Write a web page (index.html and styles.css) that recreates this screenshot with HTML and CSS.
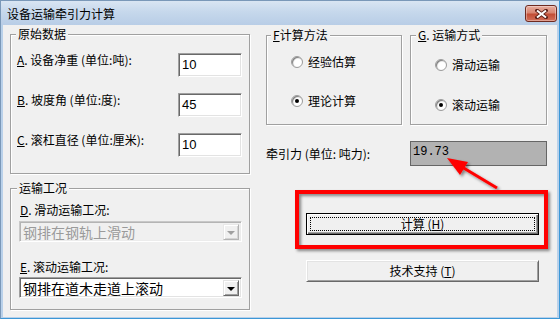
FILE: index.html
```html
<!DOCTYPE html>
<html lang="zh-CN">
<head>
<meta charset="utf-8">
<title>设备运输牵引力计算</title>
<link rel="stylesheet" href="styles.css">
</head>
<body>
<div class="window">
  <div class="titlebar">
    <span class="title">设备运输牵引力计算</span>
    <div class="close">
      <svg width="13" height="10" viewBox="0 0 13 10">
        <path d="M2 1.5 L11 8.5 M11 1.5 L2 8.5" stroke="#5a1e16" stroke-width="3.6" stroke-linecap="square"/>
        <path d="M2 1.5 L11 8.5 M11 1.5 L2 8.5" stroke="#fff" stroke-width="2"/>
      </svg>
    </div>
  </div>
  <div class="client">
    <div class="col-left">
      <fieldset class="group g-data">
        <legend>原始数据</legend>
        <div class="body">
          <div class="field"><span class="lbl"><u>A</u>. 设备净重 (单位:吨):</span><div class="input">10</div></div>
          <div class="field"><span class="lbl"><u>B</u>. 坡度角 (单位:度):</span><div class="input">45</div></div>
          <div class="field"><span class="lbl"><u>C</u>. 滚杠直径 (单位:厘米):</span><div class="input">10</div></div>
        </div>
      </fieldset>
      <fieldset class="group g-cond">
        <legend>运输工况</legend>
        <div class="body">
          <div class="lbl lbl-d"><u>D</u>. 滑动运输工况:</div>
          <div class="combo disabled"><span class="val">钢排在钢轨上滑动</span><span class="drop"><i></i></span></div>
          <div class="lbl lbl-e"><u>E</u>. 滚动运输工况:</div>
          <div class="combo combo-e"><span class="val">钢排在道木走道上滚动</span><span class="drop"><i></i></span></div>
        </div>
      </fieldset>
    </div>
    <div class="col-right">
      <div class="opts">
        <fieldset class="group g-method">
          <legend><u>F</u>计算方法</legend>
          <div class="body">
            <div class="radio"><span class="rb"></span>经验估算</div>
            <div class="radio"><span class="rb on"></span>理论计算</div>
          </div>
        </fieldset>
        <fieldset class="group g-mode">
          <legend><u>G</u>. 运输方式</legend>
          <div class="body">
            <div class="radio"><span class="rb"></span>滑动运输</div>
            <div class="radio"><span class="rb on"></span>滚动运输</div>
          </div>
        </fieldset>
      </div>
      <div class="result">
        <span class="lbl">牵引力 (单位: 吨力):</span>
        <div class="output">19.73</div>
      </div>
      <div class="buttons">
        <button class="btn btn-default"><span class="focus">计算 (<u>H</u>)</span></button>
        <button class="btn btn-support"><span class="cap">技术支持 (<u>T</u>)</span></button>
      </div>
    </div>
  </div>
  <svg class="annot" width="560" height="319" viewBox="0 0 560 319">
    <defs>
      <filter id="sh" x="-20%" y="-20%" width="140%" height="140%">
        <feDropShadow dx="2" dy="2" stdDeviation="1.6" flood-color="#000" flood-opacity="0.45"/>
      </filter>
    </defs>
    <g filter="url(#sh)">
      <rect x="297" y="192" width="249" height="55" fill="none" stroke="#ff0000" stroke-width="4"/>
      <line x1="497" y1="188" x2="462" y2="167" stroke="#ff0000" stroke-width="3"/>
      <polygon points="447,158 460,175 468,162" fill="#ff0000"/>
    </g>
  </svg>
</div>
</body>
</html>
```
FILE: styles.css
```css
* { box-sizing: border-box; }
body { margin: 0; background: #fff; }

.window {
  position: relative;
  width: 560px;
  height: 319px;
  display: flex;
  flex-direction: column;
  background: #b9d1ea;
  border: 1px solid #7a98b8;
  border-right-color: #3c97d6;
  border-bottom-color: #3c97d6;
  font-family: "Noto Sans CJK SC", sans-serif;
  font-size: 12px;
  line-height: 14px;
  color: #000;
}

.titlebar {
  height: 24px;
  flex: none;
  display: flex;
  align-items: flex-start;
  justify-content: space-between;
  padding-left: 6px;
  background: linear-gradient(to bottom, #d9e5f2 0%, #c6d8ec 45%, #b8cde6 100%);
}
.title { margin-top: 6px; font-size: 12px; line-height: 14px; }
.close {
  width: 32px;
  height: 17px;
  margin-top: 4px;
  margin-right: 2px;
  border: 1px solid #6e2a20;
  border-radius: 3px;
  background: linear-gradient(to bottom, #e7ad9f 0%, #d88571 45%, #c24d35 55%, #d2705a 100%);
  box-shadow: inset 0 0 0 1px rgba(255,255,255,0.35);
  display: flex;
  align-items: center;
  justify-content: center;
}

.client {
  flex: 1;
  margin: 0 2px 1px 2px;
  background: #f0f0f0;
  display: flex;
  padding-left: 7px;
}

.col-left { width: 240px; flex: none; }
.col-right { width: 281px; flex: none; margin-left: 16px; }

.group {
  margin: 0;
  padding: 0;
  min-width: 0;
  border: 1px solid #a0a0a0;
  box-shadow: 1px 1px 0 #fff, inset 1px 1px 0 #fff;
}
.group legend {
  padding: 0 2px;
  margin-left: 5px;
  background: #f0f0f0;
  line-height: 14px;
}

.lbl { white-space: pre; }

.g-data { width: 240px; margin-top: 2px; }
.g-data .body { padding: 12px 7px 16px 6px; }
.field {
  display: flex;
  justify-content: space-between;
  align-items: flex-start;
  height: 24px;
}
.field + .field { margin-top: 16px; }
.input {
  width: 64px;
  height: 24px;
  background: #fff;
  border: 1px solid;
  border-color: #a0a0a0 #fff #fff #a0a0a0;
  box-shadow: inset 1px 1px 0 #696969, inset -1px -1px 0 #e3e3e3;
  padding: 3px 0 0 3px;
  font-family: "Liberation Sans", Arial, sans-serif;
  font-size: 13px;
  line-height: 15px;
}

.g-cond { width: 240px; margin-top: 7px; }
.g-cond legend { margin-left: 6px; }
.g-cond .body { padding: 8px 7px 11px 8px; }
.lbl-d, .lbl-e { padding-left: 1px; }
.lbl-e { margin-top: 18px; }
.combo {
  width: 223px;
  height: 21px;
  display: flex;
  align-items: stretch;
  border: 1px solid;
  border-color: #a0a0a0 #fff #fff #a0a0a0;
  box-shadow: inset 1px 1px 0 #696969, inset -1px -1px 0 #e3e3e3;
  padding: 2px 2px 1px 2px;
  background: #fff;
  margin-top: 4px;
}
.combo-e { margin-top: 3px; }
.combo .val {
  flex: 1;
  min-width: 0;
  font-size: 14px;
  line-height: 16px;
  padding-left: 1px;
  white-space: nowrap;
}
.combo .drop {
  width: 16px;
  flex: none;
  background: #f0f0f0;
  border: 1px solid;
  border-color: #e3e3e3 #696969 #696969 #e3e3e3;
  box-shadow: inset 1px 1px 0 #fff, inset -1px -1px 0 #a0a0a0;
  display: flex;
  align-items: center;
  justify-content: center;
}
.combo .drop i {
  width: 0;
  height: 0;
  border-left: 4px solid transparent;
  border-right: 4px solid transparent;
  border-top: 4px solid #000;
  margin-top: 1px;
}
.combo.disabled {
  background: #f0f0f0;
  border-color: #c8c8c8 #fff #fff #c8c8c8;
  box-shadow: inset 1px 1px 0 #b4b4b4, inset -1px -1px 0 #ececec;
}
.combo.disabled .val { color: #9a9a9a; }
.combo.disabled .drop {
  border-color: #e8e8e8 #b4b4b4 #b4b4b4 #e8e8e8;
  box-shadow: inset 1px 1px 0 #fff, inset -1px -1px 0 #d4d4d4;
}
.combo.disabled .drop i { border-top-color: #a0a0a0; }

.opts { display: flex; gap: 8px; margin-top: 3px; }
.g-method { width: 136px; }
.g-method legend { margin-left: 4px; }
.g-mode { width: 137px; }
.g-method .body { padding: 13px 0 16px 24px; }
.g-mode .body { padding: 16px 0 12px 24px; }
.radio { display: flex; align-items: center; height: 14px; }
.g-method .radio + .radio { margin-top: 25px; }
.g-mode .radio + .radio { margin-top: 26px; }
.rb {
  position: relative;
  width: 12px;
  height: 12px;
  border-radius: 50%;
  border: 1px solid #9c9c9c;
  background: radial-gradient(circle at 60% 60%, #fff 45%, #e6e6e6 100%);
  box-shadow: inset 1px 1px 1px #7a7a7a;
  margin-right: 5px;
  flex: none;
}
.rb.on::after {
  content: "";
  position: absolute;
  left: 3px;
  top: 3px;
  width: 4px;
  height: 4px;
  border-radius: 50%;
  background: #000;
}

.result {
  margin-top: 16px;
  display: flex;
  align-items: center;
  justify-content: space-between;
}
.output {
  width: 137px;
  height: 25px;
  background: #b2b2b2;
  border: 1px solid #666;
  padding: 3px 0 0 2px;
  font-family: "Liberation Mono", "Courier New", monospace;
  font-size: 12px;
  line-height: 14px;
}

.buttons { display: flex; flex-direction: column; align-items: flex-start; }
.btn {
  width: 233px;
  height: 22px;
  margin: 0 0 0 40px;
  padding: 0;
  background: #f0f0f0;
  font: inherit;
  color: #000;
  border: 1px solid;
  border-color: #fff #696969 #696969 #fff;
  box-shadow: inset 1px 1px 0 #e3e3e3, inset -1px -1px 0 #a0a0a0;
  display: flex;
  align-items: center;
  justify-content: center;
  white-space: pre;
}
.btn-default {
  margin-top: 47px;
  border: 1px solid #000;
  box-shadow: inset 1px 1px 0 #fff, inset -1px -1px 0 #696969, inset -2px -2px 0 #a0a0a0;
  padding: 3px;
}
.btn-default .focus {
  flex: 1;
  align-self: stretch;
  border: 1px dotted #000;
  display: flex;
  align-items: center;
  justify-content: center;
}
.btn-support { margin-top: 25px; }

.annot {
  position: absolute;
  left: -1px;
  top: -1px;
  pointer-events: none;
}
```
